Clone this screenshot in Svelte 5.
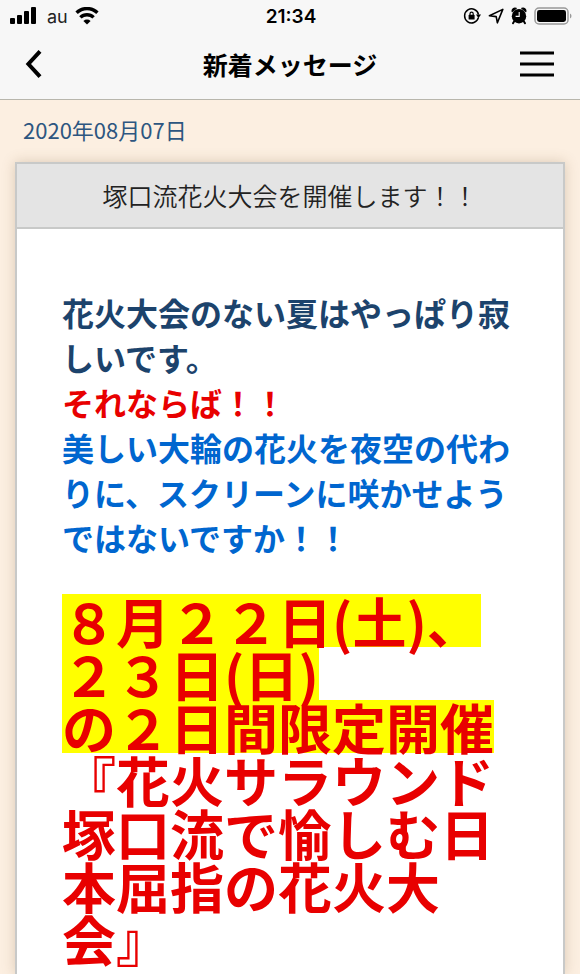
<script lang="ts">
  let { carrier = 'au', time = '21:34', date = '2020年08月07日' }: {
    carrier?: string;
    time?: string;
    date?: string;
  } = $props();

  const highlighted = ['８月２２日(土)、', '２３日(日)', 'の２日間限定開催'];
</script>

<div class="page">
  <header class="header">
    <div class="status">
      <div class="status-side">
        <svg width="26" height="18" viewBox="0 0 26 18" aria-hidden="true">
          <rect x="0" y="11" width="5" height="6" rx="1" />
          <rect x="7" y="8" width="5" height="9" rx="1" />
          <rect x="14" y="4" width="5" height="13" rx="1" />
          <rect x="21" y="0" width="5" height="17" rx="1" />
        </svg>
        <span class="carrier">{carrier}</span>
        <svg width="24" height="18" viewBox="0 0 24 18" aria-hidden="true">
          <g fill="none" stroke="#000" stroke-width="3.4">
            <path d="M1.6 5.8a14.8 14.8 0 0 1 20.8 0" />
            <path d="M5.4 10.4a9.4 9.4 0 0 1 13.2 0" />
          </g>
          <path d="M12 17.4l-3.6-3.4a5.2 5.2 0 0 1 7.2 0z" />
        </svg>
      </div>
      <span class="time">{time}</span>
      <div class="status-side right">
        <svg width="18" height="18" viewBox="0 0 18 18" aria-hidden="true">
          <path d="M15.4 10.6a7 7 0 1 1 .1-3" fill="none" stroke="#000" stroke-width="1.5" />
          <path d="M13 7.6h5l-2.5 3.6z" />
          <rect x="5.6" y="7.8" width="6" height="4.8" rx=".6" />
          <path d="M7 8.4V6.7a1.6 1.6 0 0 1 3.2 0v1.7" fill="none" stroke="#000" stroke-width="1.2" />
        </svg>
        <svg width="16" height="18" viewBox="0 0 16 18" aria-hidden="true">
          <path d="M14.8 2.4L9.4 15.8 8.2 9.6 1.4 8.8z" fill="none" stroke="#000" stroke-width="1.6" stroke-linejoin="round" />
        </svg>
        <svg width="16" height="18" viewBox="0 0 16 18" aria-hidden="true">
          <circle cx="8" cy="9.2" r="7.2" />
          <path d="M1.2 4.6A2.8 2.8 0 0 1 5.2 1.4zM14.8 4.6a2.8 2.8 0 0 0-4-3.2z" stroke="#000" stroke-width="1.2" stroke-linejoin="round" />
          <path d="M3.4 14l-1.4 2.2M12.6 14l1.4 2.2" stroke="#000" stroke-width="2" stroke-linecap="round" />
          <path d="M8.2 5v4.4H4.6" fill="none" stroke="#f7f7f7" stroke-width="1.1" />
        </svg>
        <svg width="38" height="18" viewBox="0 0 38 18" aria-hidden="true">
          <rect x="1" y="1" width="33" height="16" rx="4" fill="none" stroke="#999" stroke-width="1.5" />
          <rect x="3" y="3" width="29" height="12" rx="2.4" />
          <path d="M36 6.4a3 3 0 0 1 0 5.2z" fill="#999" />
        </svg>
      </div>
    </div>
    <nav class="nav">
      <button class="nav-btn" aria-label="戻る">
        <svg width="18" height="30" viewBox="2 0 18 30" aria-hidden="true">
          <path d="M16 2.4L4.4 15 16 27.6" fill="none" stroke="#000" stroke-width="4" />
        </svg>
      </button>
      <h1>新着メッセージ</h1>
      <button class="nav-btn" aria-label="メニュー">
        <svg width="34" height="26" viewBox="0 0 34 26" aria-hidden="true">
          <path d="M0 2h34M0 13h34M0 24h34" stroke="#000" stroke-width="3" />
        </svg>
      </button>
    </nav>
  </header>

  <main>
    <time class="date" datetime="2020-08-07">{date}</time>
    <article class="card">
      <h2>塚口流花火大会を開催します！！</h2>
      <div class="body">
        <p class="lead">
          花火大会のない夏はやっぱり寂しいです。<br />
          <span class="red">それならば！！</span><br />
          <span class="blue">美しい大輪の花火を夜空の代わりに、スクリーンに咲かせようではないですか！！</span>
        </p>
        <p class="event red">
          {#each highlighted as line}
            <mark>{line}</mark>
          {/each}
          『花火サラウンド塚口流で愉しむ日本屈指の花火大会』
        </p>
      </div>
    </article>
  </main>
</div>

<style>
  :global(body) {
    margin: 0;
    background: #fcefe1;
  }
  .page {
    display: flex;
    flex-direction: column;
    min-height: 100vh;
    font-family: "Noto Sans CJK JP", sans-serif;
    text-spacing-trim: space-all;
  }
  .header {
    background: #f7f7f7;
    border-bottom: 1px solid #b8b6ac;
  }
  .status {
    display: flex;
    align-items: center;
    height: 32px;
    padding: 0 8px 0 10px;
    font-family: Inter, sans-serif;
    font-size: 18px;
  }
  .status-side {
    display: flex;
    flex: 1;
    align-items: center;
    gap: 7px;
  }
  .right {
    justify-content: flex-end;
  }
  .carrier {
    margin-left: 4px;
    color: #222;
  }
  .time {
    font-size: 19px;
    font-weight: 600;
  }
  .nav {
    display: flex;
    align-items: center;
    justify-content: space-between;
    height: 67px;
    padding: 0 26px 3px;
    box-sizing: border-box;
  }
  .nav-btn {
    display: flex;
    align-items: center;
    min-width: 34px;
    padding: 0;
    border: none;
    background: none;
    cursor: pointer;
  }
  .nav-btn svg {
    overflow: visible;
  }
  h1 {
    margin: 0;
    font-size: 25px;
    font-weight: 700;
    line-height: 32px;
  }
  main {
    display: flex;
    flex: 1;
    flex-direction: column;
    padding: 0 15px;
  }
  .date {
    padding: 13px 8px 17px;
    color: #2d5680;
    font-size: 22px;
    font-weight: 400;
    line-height: 32px;
  }
  .card {
    flex: 1;
    border: 2px solid #c8c9c8;
    border-bottom: none;
    background: #fff;
    box-shadow: 0 0 12px rgba(120, 90, 50, 0.25);
  }
  h2 {
    margin: 0;
    padding: 13px 0 14px;
    border-bottom: 2px solid #c8c9c8;
    background: #e4e4e4;
    color: #222;
    font-size: 25px;
    font-weight: 350;
    line-height: 36px;
    text-align: center;
  }
  .body {
    padding: 61px 45px 0;
    font-weight: 700;
  }
  p {
    margin: 0;
  }
  .lead {
    margin-bottom: 34px;
    color: #1c436c;
    font-size: 32px;
    line-height: 45px;
  }
  .red {
    color: #e80000;
  }
  .blue {
    color: #0066cf;
  }
  .event {
    font-size: 54px;
    line-height: 53px;
  }
  mark {
    display: block;
    width: fit-content;
    background: #ff0;
    color: inherit;
  }
</style>
